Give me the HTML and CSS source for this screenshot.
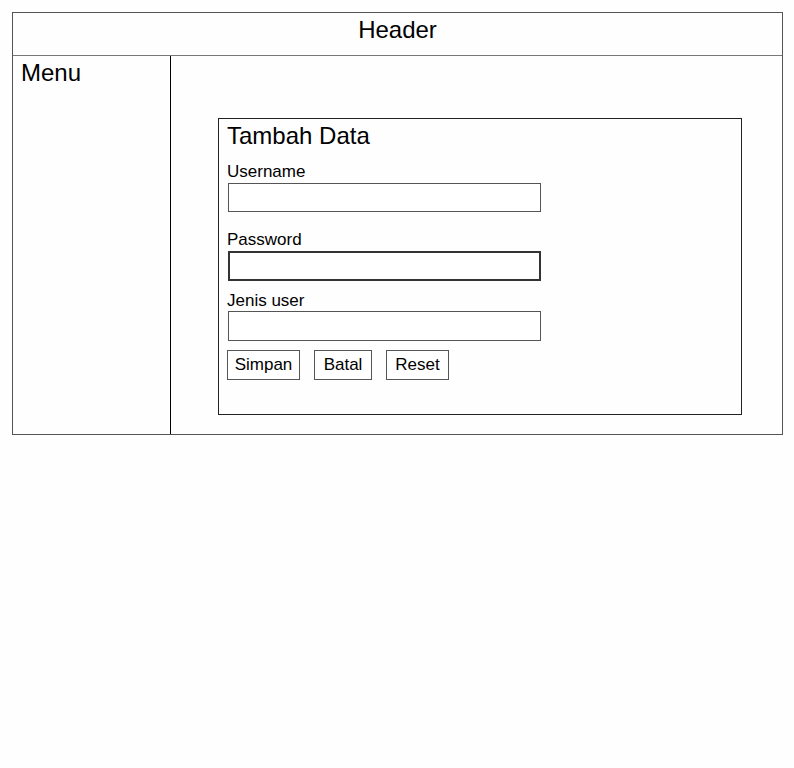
FILE: index.html
```html
<!DOCTYPE html>
<html>
<head>
<meta charset="utf-8">
<link rel="stylesheet" href="styles.css">
</head>
<body>
<div class="page">
  <div class="header">Header</div>
  <div class="main">
    <div class="menu">Menu</div>
    <div class="content">
      <form class="form">
        <div class="title">Tambah Data</div>
        <label class="label label-first">Username</label>
        <input class="field" type="text">
        <label class="label label-second">Password</label>
        <input class="field field-strong" type="password">
        <label class="label label-third">Jenis user</label>
        <input class="field field-last" type="text">
        <div class="buttons">
          <button type="button" class="btn btn-simpan">Simpan</button>
          <button type="button" class="btn btn-batal">Batal</button>
          <button type="button" class="btn btn-reset">Reset</button>
        </div>
      </form>
    </div>
  </div>
</div>
</body>
</html>
```

FILE: styles.css
```css
html, body {
  margin: 0;
  padding: 0;
  background: #fefefe;
}
body {
  font-family: "Liberation Sans", Arial, sans-serif;
  color: #000;
}
.page {
  box-sizing: border-box;
  width: 771px;
  margin: 12px 0 0 12px;
  border: 1px solid #555;
}
.header {
  box-sizing: border-box;
  height: 43px;
  padding-top: 3px;
  border-bottom: 1px solid #777;
  font-size: 24px;
  line-height: 28px;
  text-align: center;
}
.main {
  display: flex;
  height: 378px;
}
.menu {
  box-sizing: border-box;
  width: 158px;
  padding: 3px 8px 0 8px;
  border-right: 1px solid #000;
  font-size: 24px;
  line-height: 28px;
}
.content {
  flex: 1;
  padding: 62px 40px 19px 47px;
}
.form {
  box-sizing: border-box;
  height: 297px;
  margin: 0;
  padding: 3px 8px 0 9px;
  border: 1px solid #222;
  display: flex;
  flex-direction: column;
  align-items: flex-start;
}
.title {
  font-size: 24px;
  line-height: 28px;
  margin-left: -1px;
}
.label {
  font-size: 17px;
  line-height: 19px;
  margin-left: -1px;
}
.label-first {
  margin-top: 12px;
}
.label-second {
  margin-top: 18px;
}
.label-third {
  margin-top: 10px;
}
.field {
  box-sizing: border-box;
  width: 313px;
  height: 29px;
  margin: 2px 0 0 0;
  padding: 0 4px;
  border: 1px solid #555;
  background: #fff;
  font-family: "Liberation Sans", Arial, sans-serif;
  font-size: 16px;
  outline: none;
}
.field-strong {
  height: 30px;
  border: 2px solid #333;
}
.field-last {
  height: 30px;
  margin-top: 1px;
}
.buttons {
  display: flex;
  gap: 14px;
  margin-top: 9px;
  margin-left: -1px;
}
.btn {
  box-sizing: border-box;
  height: 30px;
  padding: 0;
  border: 1px solid #555;
  background: #fff;
  font-family: "Liberation Sans", Arial, sans-serif;
  font-size: 17px;
  color: #000;
  line-height: 28px;
  text-align: center;
}
.btn-simpan {
  width: 73px;
}
.btn-batal {
  width: 58px;
}
.btn-reset {
  width: 63px;
}
```
